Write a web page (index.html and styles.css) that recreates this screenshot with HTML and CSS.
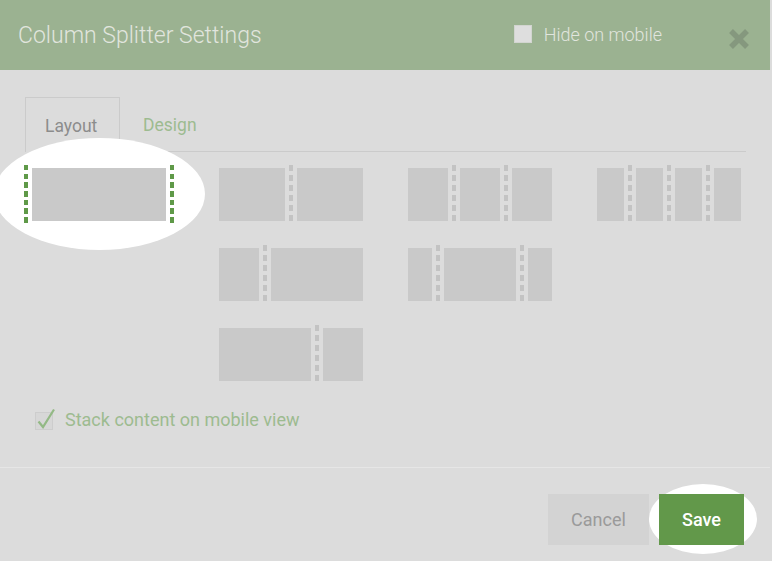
FILE: index.html
```html
<!DOCTYPE html>
<html lang="en">
<head>
<meta charset="utf-8">
<title>Column Splitter Settings</title>
<link rel="stylesheet" href="styles.css">
</head>
<body>
<div class="dialog">
  <header class="header">
    <h1 class="title">Column Splitter Settings</h1>
    <label class="hide-mobile"><span class="hm-box"></span><span class="hm-text">Hide on mobile</span></label>
    <svg class="close" width="22" height="22" viewBox="0 0 22 22" aria-label="Close">
      <path d="M3 3 L19 19 M19 3 L3 19" stroke="#85987e" stroke-width="5.5" stroke-linecap="butt"/>
    </svg>
  </header>

  <main class="main">
    <div class="tabs">
      <div class="tab active">Layout</div>
      <div class="tab-rest"><span class="tab">Design</span></div>
    </div>

    <div class="layouts">
      <div class="item selected">
        <span class="div green"></span><span class="col g1"></span><span class="div green"></span>
      </div>
      <div class="item">
        <span class="col g1"></span><span class="div"></span><span class="col g1"></span>
      </div>
      <div class="item">
        <span class="col g1"></span><span class="div"></span><span class="col g1"></span><span class="div"></span><span class="col g1"></span>
      </div>
      <div class="item">
        <span class="col g1"></span><span class="div"></span><span class="col g1"></span><span class="div"></span><span class="col g1"></span><span class="div"></span><span class="col g1"></span>
      </div>

      <div class="item c2">
        <span class="col g3"></span><span class="div"></span><span class="col g7"></span>
      </div>
      <div class="item">
        <span class="col g2"></span><span class="div"></span><span class="col g6"></span><span class="div"></span><span class="col g2"></span>
      </div>

      <div class="item c2">
        <span class="col g7"></span><span class="div"></span><span class="col g3"></span>
      </div>
    </div>

    <label class="stack">
      <svg class="stack-box" width="22" height="24" viewBox="0 0 22 24">
        <rect x="0.5" y="5.5" width="17" height="17" fill="#d7d7d7" stroke="#cdcdcd"/>
        <path d="M3.5 14.5 L8 20 L19 2.5" fill="none" stroke="#93b985" stroke-width="2.2"/>
      </svg>
      <span class="stack-text">Stack content on mobile view</span>
    </label>
  </main>

  <footer class="footer">
    <button class="btn cancel">Cancel</button>
    <span class="save-wrap"><button class="btn save">Save</button></span>
  </footer>
</div>
</body>
</html>
```

FILE: styles.css
```css
* { box-sizing: border-box; }

html, body {
  margin: 0;
  padding: 0;
}

body {
  width: 772px;
  height: 561px;
  background: #dcdcdc;
  font-family: Roboto, "Liberation Sans", sans-serif;
  overflow: hidden;
}

.dialog {
  width: 770px;
}

.header {
  height: 70px;
  background: #9bb291;
  display: flex;
  align-items: center;
  padding: 0 20px 0 18px;
}

.title {
  flex: 1;
  margin: 0;
  font-size: 23px;
  font-weight: 300;
  color: #e1e5de;
}

.hide-mobile {
  display: flex;
  align-items: center;
  gap: 12px;
  color: #e1e5de;
  font-size: 18px;
  font-weight: 300;
  margin-top: -2px;
}

.hm-box {
  width: 18px;
  height: 18px;
  background: #dedede;
  border: 1px solid #d2d5d0;
}

.close {
  margin-left: 66px;
  margin-top: 8px;
}

.main {
  padding: 27px 0 36px 24px;
  border-bottom: 1px solid #e6e6e6;
}

.tabs {
  display: flex;
  width: 721px;
  margin-left: 1px;
  height: 55px;
}

.tab {
  font-size: 17.5px;
}

.tab.active {
  width: 95px;
  height: 55px;
  border: 1px solid #cbcbcb;
  border-bottom: none;
  color: #8c8c8c;
  display: flex;
  align-items: center;
  padding-left: 19px;
  padding-top: 1px;
}

.tab-rest {
  flex: 1;
  border-bottom: 1px solid #cbcbcb;
  display: flex;
  align-items: center;
  padding-left: 23px;
  padding-top: 1px;
  color: #9dbb90;
}

.layouts {
  margin-top: 13px;
  display: grid;
  grid-template-columns: 150px 144px 144px 144px;
  grid-auto-rows: 60px;
  column-gap: 45px;
  row-gap: 20px;
}

.item {
  display: flex;
  height: 60px;
  position: relative;
  isolation: isolate;
}

.item.c2 {
  grid-column: 2;
}

.item.selected::before {
  content: "";
  position: absolute;
  left: -30px;
  top: -27px;
  width: 211px;
  height: 112px;
  border-radius: 50%;
  background: #ffffff;
  z-index: -1;
}

.col {
  flex-basis: 0;
  background: #c9c9c9;
  margin: 3px 0 4px;
}

.g1 { flex-grow: 1; }
.g2 { flex-grow: 2; }
.g3 { flex-grow: 3; }
.g6 { flex-grow: 6; }
.g7 { flex-grow: 7; }

.div {
  width: 4px;
  flex: none;
  margin: 0 4px;
  background: repeating-linear-gradient(to bottom, #c3c3c3 0 6px, transparent 6px 10px);
}

.div.green {
  margin: 0;
  background: repeating-linear-gradient(to bottom, #5f9948 0 5.5px, transparent 5.5px 8.7px);
}

.item.selected .col {
  margin: 3px 4px 4px;
}

.stack {
  margin-top: 22px;
  margin-left: 11px;
  display: flex;
  align-items: flex-end;
  gap: 8px;
  height: 24px;
}

.stack-box {
  display: block;
}

.stack-text {
  font-size: 18px;
  color: #9dbb90;
  line-height: 20px;
  padding-bottom: 1px;
}

.footer {
  display: flex;
  justify-content: flex-end;
  align-items: flex-start;
  gap: 10px;
  padding: 26px 26px 0 0;
}

.btn {
  font-family: Roboto, "Liberation Sans", sans-serif;
  font-size: 18px;
  height: 51px;
  border: none;
  padding: 0;
  display: block;
}

.cancel {
  width: 101px;
  background: #d3d3d3;
  color: #9a9a9a;
}

.save-wrap {
  position: relative;
  isolation: isolate;
  display: block;
}

.save-wrap::before {
  content: "";
  position: absolute;
  left: -10px;
  top: -10px;
  width: 108px;
  height: 70px;
  border-radius: 50%;
  background: #ffffff;
  z-index: -1;
}

.save {
  width: 85px;
  background: #62984a;
  color: #ffffff;
  font-weight: 500;
}
```
